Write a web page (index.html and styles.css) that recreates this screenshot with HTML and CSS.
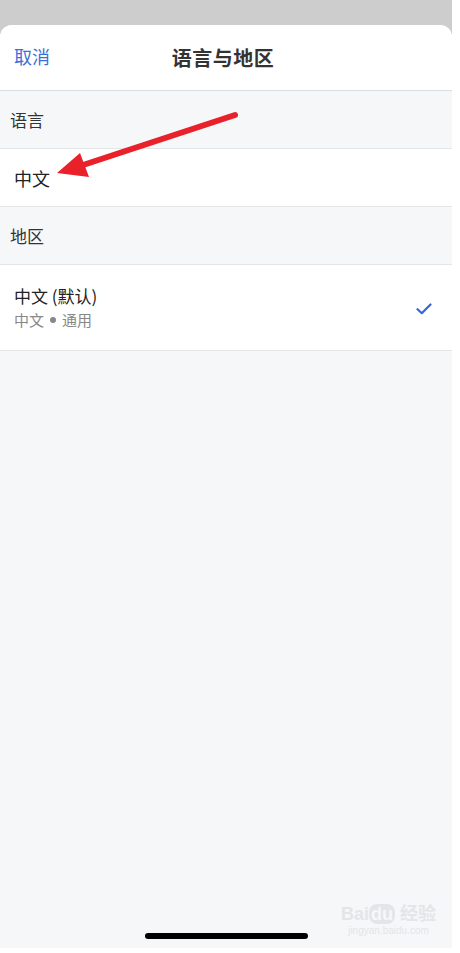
FILE: index.html
```html
<!DOCTYPE html>
<html>
  <head>
    <meta charset="utf-8">
    <title>语言与地区</title>
    <link rel="stylesheet" href="styles.css">
  </head>
  <body>
    <div class="screen">
      <div class="sheet">
        <header class="nav">
          <span class="nav-cancel">取消</span>
          <h1 class="nav-title">语言与地区</h1>
        </header>

        <div class="section-title">语言</div>
        <div class="row row-single">
          <span class="row-label">中文</span>
        </div>

        <div class="section-title">地区</div>
        <div class="row row-double">
          <div class="row-text">
            <span class="row-label">中文 (默认)</span>
            <span class="row-sub">中文<i class="dot"></i>通用</span>
          </div>
          <svg class="check" width="16" height="12" viewBox="0 0 16 12">
            <path d="M1.5 6.2 L5.8 10.2 L14.5 1.5" fill="none" stroke="#3366dd" stroke-width="2.2" stroke-linecap="round" stroke-linejoin="round"/>
          </svg>
        </div>

        <div class="filler"></div>

        <div class="watermark">
          <span class="wm-logo">Bai<b>du</b> 经验</span>
          <span class="wm-url">jingyan.baidu.com</span>
        </div>
        <div class="home-bar"></div>

        <!-- 标注箭头 -->
        <svg class="arrow" width="452" height="200" viewBox="0 0 452 200">
          <line x1="235" y1="90" x2="80" y2="141" stroke="#e8212b" stroke-width="6" stroke-linecap="round"/>
          <polygon points="57,148 80,128 89,152" fill="#e8212b"/>
        </svg>
      </div>
    </div>
  </body>
</html>
```

FILE: styles.css
```css
/* 基础样式 */
* {
  box-sizing: border-box;
  margin: 0;
  padding: 0;
}

body {
  background-color: #fff;
  font-family: "Noto Sans CJK SC", "Noto Sans", sans-serif;
  color: #222;
}

.screen {
  width: 452px;
  height: 948px;
  background-color: #cdcdcd;
  display: flex;
  flex-direction: column;
}

.sheet {
  position: relative;
  flex: 1;
  margin-top: 25px;
  border-radius: 12px 12px 0 0;
  background-color: #f6f7f9;
  display: flex;
  flex-direction: column;
  overflow: hidden;
}

/* 顶部导航 */
.nav {
  height: 66px;
  background-color: #fff;
  border-bottom: 1px solid #dcdde0;
  display: flex;
  align-items: center;
  justify-content: center;
  position: relative;
}

.nav-cancel {
  position: absolute;
  left: 14px;
  top: 18px;
  font-size: 18px;
  color: #3d6fd9;
}

.nav-title {
  font-size: 20px;
  font-weight: bold;
  color: #333;
  margin-left: -6px;
  letter-spacing: 0.5px;
}

/* 分组标题 */
.section-title {
  height: 58px;
  padding-left: 10px;
  display: flex;
  align-items: center;
  font-size: 17px;
  color: #333;
  border-bottom: 1px solid #e4e5e8;
}

/* 列表行 */
.row {
  background-color: #fff;
  padding: 0 14px;
  display: flex;
  align-items: center;
  border-bottom: 1px solid #e4e5e8;
}

.row-single {
  height: 58px;
}

.row-double {
  height: 86px;
  justify-content: space-between;
  padding-right: 20px;
}

.row-label {
  font-size: 18px;
  color: #222;
}

.row-text {
  display: flex;
  flex-direction: column;
  margin-top: -2px;
}

.row-text .row-label {
  font-size: 17px;
  line-height: 26px;
}

.row-sub {
  font-size: 15px;
  line-height: 22px;
  color: #888;
  display: flex;
  align-items: center;
}

.dot {
  width: 6px;
  height: 6px;
  border-radius: 50%;
  background-color: #888;
  margin: 1px 6px 0 6px;
}

.check {
  margin-top: 2px;
}

.filler {
  flex: 1;
}

/* 底部 */
.watermark {
  position: absolute;
  right: 16px;
  bottom: 12px;
  display: flex;
  flex-direction: column;
  align-items: center;
  color: #e4e5e8;
  font-family: "Liberation Sans", "Noto Sans CJK SC", sans-serif;
}

.wm-logo {
  font-size: 18px;
  font-weight: bold;
}

.wm-logo b {
  background-color: #e4e5e8;
  color: #f6f7f9;
  border-radius: 8px;
  padding: 0 2px;
}

.wm-url {
  font-size: 10px;
}

.home-bar {
  width: 163px;
  height: 6px;
  border-radius: 3px;
  background-color: #000;
  margin: 0 auto 9px;
}

.arrow {
  position: absolute;
  left: 0;
  top: 0;
}
```
